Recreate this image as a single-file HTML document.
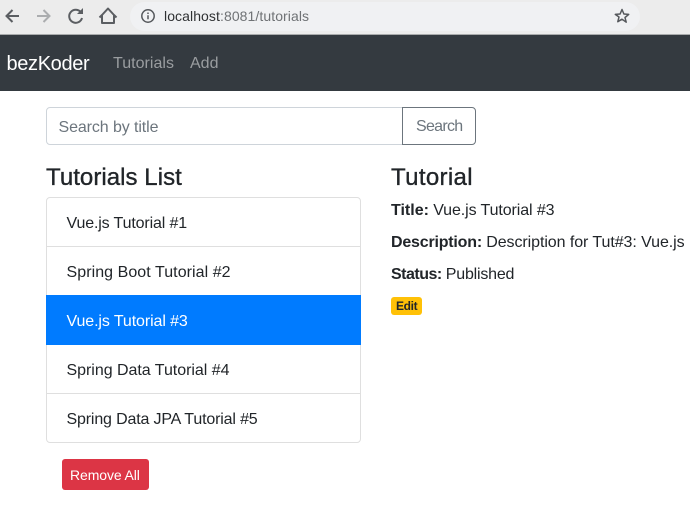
<!DOCTYPE html>
<html><head><meta charset="utf-8"><style>
html,body{margin:0;padding:0;background:#fff;width:690px;height:510px;overflow:hidden}
body{position:relative;font-family:"Liberation Sans",sans-serif;color:#212529;font-size:16px}
.a{position:absolute;white-space:nowrap;line-height:20px}
.box{position:absolute;box-sizing:border-box}
.li{left:66.500px}
.h{-webkit-text-stroke:.35px #212529}
</style></head><body>
<div class="box" style="left:0;top:0;width:690px;height:34px;background:#ececec"></div>
<div class="box" style="left:0;top:34px;width:690px;height:1px;background:#a9abac"></div>
<div class="box" style="left:130px;top:2px;width:510px;height:29px;border-radius:15px;background:#f0f1f3"></div>
<svg class="box" style="left:0;top:0" width="130" height="34" fill="none" stroke-width="2">
<path d="M19 16H7M12.500 10 6.500 16l6 6" stroke="#5b5e62"/>
<path d="M37 16H49M43.500 10l6 6-6 6" stroke="#abadaf"/>
<path d="M81 12.500A6.500 6.500 0 1 0 82 18" stroke="#5b5e62"/><path d="M77 14H83V8" fill="#5b5e62" stroke="none"/>
<path d="M108 8.500 102 15v8h12V15zM102 15l-2.500 2.500M114 15l2.500 2.500" stroke="#5b5e62" stroke-linejoin="round"/>
</svg>
<svg class="box" style="left:140px;top:8px" width="16" height="16" fill="none"><circle cx="8" cy="8" r="6.200" stroke="#55585c" stroke-width="1.500"/><path d="M8 7.300v4M8 4.500v1.500" stroke="#55585c" stroke-width="1.500"/></svg>
<div class="a" style="left:164px;top:6px;font-size:14px;letter-spacing:.08px;color:#2f3133">localhost<span style="color:#6f7275">:8081/tutorials</span></div>
<svg class="box" style="left:613px;top:7px" width="18" height="18" fill="none"><path d="M9 2.500l1.900 4.500 4.800.4-3.700 3.100 1.200 4.700L9 12.200l-4.200 2.500L6 10 2.300 7.400l4.800-.4z" stroke="#55585c" stroke-width="1.500" stroke-linejoin="round"/></svg>

<div class="box" style="left:0;top:35px;width:690px;height:56px;background:#343a40"></div>
<div class="a" style="left:6.500px;top:54px;font-size:20px;line-height:20px;color:#fff;letter-spacing:-.35px">bezKoder</div>
<div class="a" style="left:113px;top:54px;color:#9a9da0;letter-spacing:.03px">Tutorials</div>
<div class="a" style="left:190px;top:54px;color:#9a9da0">Add</div>

<div class="box" style="left:46px;top:107px;width:357px;height:38px;border:1px solid #ced4da;border-radius:4px 0 0 4px"></div>
<div class="a" style="left:58.500px;top:118px;color:#6c757d;letter-spacing:-.1px">Search by title</div>
<div class="box" style="left:402px;top:107px;width:74px;height:38px;border:1px solid #6c757d;border-radius:0 4px 4px 0"></div>
<div class="a" style="left:416px;top:117px;color:#6c757d;letter-spacing:-.7px">Search</div>

<div class="a h" style="left:46px;top:166px;font-size:24px;line-height:24px;letter-spacing:.05px">Tutorials List</div>
<div class="box" style="left:46px;top:197px;width:315px;height:246px;border:1px solid #dfdfdf;border-radius:4px"></div>
<div class="box" style="left:46px;top:246px;width:315px;height:1px;background:#dfdfdf"></div>
<div class="box" style="left:46px;top:295px;width:315px;height:50px;background:#007bff"></div>
<div class="box" style="left:46px;top:393px;width:315px;height:1px;background:#dfdfdf"></div>
<div class="a li" style="top:214px;letter-spacing:-.14px">Vue.js Tutorial #1</div>
<div class="a li" style="top:263px;letter-spacing:.06px">Spring Boot Tutorial #2</div>
<div class="a li" style="top:312px;color:#fff;letter-spacing:-.1px">Vue.js Tutorial #3</div>
<div class="a li" style="top:361px;letter-spacing:-.03px">Spring Data Tutorial #4</div>
<div class="a li" style="top:410px;letter-spacing:-.16px">Spring Data JPA Tutorial #5</div>
<div class="box" style="left:62px;top:459px;width:87px;height:31px;background:#dc3545;border-radius:3px"></div>
<div class="a" style="left:70px;top:465px;font-size:14px;color:#fff;letter-spacing:-.1px">Remove All</div>

<div class="a h" style="left:391px;top:166px;font-size:24px;line-height:24px;letter-spacing:.35px">Tutorial</div>
<div class="a" style="left:391px;top:201px;letter-spacing:-.2px"><b style="letter-spacing:0">Title:</b> <span style="letter-spacing:-.1px">Vue.js Tutorial #3</span></div>
<div class="a" style="left:391px;top:233px;letter-spacing:-.2px"><b>Description:</b> <span style="letter-spacing:-.07px">Description for Tut#3: Vue.js</span></div>
<div class="a" style="left:391px;top:265px;letter-spacing:-.4px"><b style="letter-spacing:-.5px">Status:</b> <span style="letter-spacing:-.2px">Published</span></div>
<div class="box" style="left:391px;top:297px;width:31px;height:18px;background:#ffc107;border-radius:3px"></div>
<div class="a" style="left:396px;top:297px;font-size:12px;line-height:18px;font-weight:700;letter-spacing:-.35px">Edit</div>
</body></html>
